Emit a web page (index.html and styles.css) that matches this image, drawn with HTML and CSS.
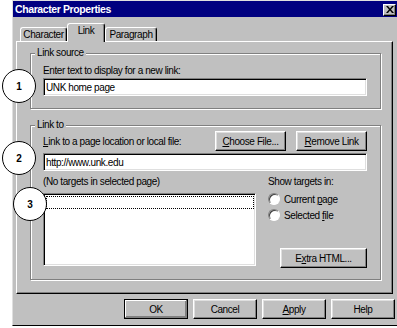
FILE: index.html
```html
<!DOCTYPE html>
<html lang="en">
<head>
  <meta charset="UTF-8">
  <title>Character Properties</title>
  <link rel="stylesheet" href="styles.css">
</head>
<body>

  <div class="window">
    <!-- Title bar -->
    <div class="titlebar">
      <span class="title">Character Properties</span>
      <button class="close">
        <svg width="8" height="7" viewBox="0 0 8 7"><path d="M0 0h2l2 2.5L6 0h2L5 3.5 8 7H6L4 4.5 2 7H0l3-3.5z" fill="#000"/></svg>
      </button>
    </div>

    <!-- Tabs -->
    <div class="tabs">
      <div class="tab tab-character">Character</div>
      <div class="tab tab-link active">Link</div>
      <div class="tab tab-paragraph">Paragraph</div>
    </div>

    <div class="panel">
      <fieldset class="group group-source">
        <legend>Link source</legend>
        <div class="label">Enter text to display for a new link:</div>
        <input class="field" type="text" value="UNK home page">
      </fieldset>

      <fieldset class="group group-target">
        <legend>Link to</legend>
        <div class="link-row">
          <div class="label"><u>L</u>ink to a page location or local file:</div>
          <div class="link-buttons">
            <button class="btn"><u>C</u>hoose File...</button>
            <button class="btn"><u>R</u>emove Link</button>
          </div>
        </div>
        <input class="field" type="text" value="http://www.unk.edu">

        <div class="targets">
          <div class="targets-list">
            <div class="label">(No targets in selected page)</div>
            <div class="listbox">
              <div class="focus-row"></div>
            </div>
          </div>
          <div class="targets-side">
            <div class="label">Show targets in:</div>
            <label class="radio"><span class="radio-dot"></span><span>Current <u>p</u>age</span></label>
            <label class="radio"><span class="radio-dot"></span><span>Selected <u>f</u>ile</span></label>
            <button class="btn btn-extra">E<u>x</u>tra HTML...</button>
          </div>
        </div>
      </fieldset>
    </div>

    <!-- Dialog buttons -->
    <div class="actions">
      <button class="btn btn-default">OK</button>
      <button class="btn">Cancel</button>
      <button class="btn"><u>A</u>pply</button>
      <button class="btn">Help</button>
    </div>
  </div>

  <!-- Numbered callouts over the screenshot -->
  <div class="callout callout-1">1</div>
  <div class="callout callout-2">2</div>
  <div class="callout callout-3">3</div>

</body>
</html>
```

FILE: styles.css
```css
html, body {
  margin: 0;
  padding: 0;
  background-color: #fff;
  font-family: "Liberation Sans", Arial, sans-serif;
  font-size: 10px;
  letter-spacing: -0.4px;
  color: #000;
}

body {
  width: 397px;
  height: 328px;
  overflow: hidden;
  position: relative;
}

u {
  text-decoration: underline;
  text-underline-offset: 1px;
}

/* Outer dialog frame */
.window {
  width: 387px;
  height: 326px;
  margin-left: 12px;
  box-sizing: border-box;
  border: 1px solid;
  border-color: #dfdfdf #000 #000 #dfdfdf;
  background-color: #c0c0c0;
  display: flex;
  flex-direction: column;
}

.titlebar {
  height: 16px;
  flex: none;
  background-color: #000080;
  color: #fff;
  display: flex;
  align-items: center;
  justify-content: space-between;
  padding: 0 2px;
}

.title {
  font-weight: bold;
  font-size: 10.5px;
  letter-spacing: -0.4px;
}

.close {
  width: 13px;
  height: 12px;
  padding: 0;
  margin-top: 1px;
  box-sizing: border-box;
  background-color: #c0c0c0;
  border: 1px solid;
  border-color: #fff #000 #000 #fff;
  box-shadow: inset -1px -1px #808080;
  display: flex;
  align-items: center;
  justify-content: center;
}

/* Tabs */
.tabs {
  display: flex;
  align-items: flex-end;
  height: 18px;
  margin-top: 6px;
  padding-left: 7px;
  position: relative;
  z-index: 1;
}

.tab {
  box-sizing: border-box;
  height: 14px;
  border: 1px solid;
  border-bottom: none;
  border-color: #fff #000 #000 #fff;
  border-radius: 3px 3px 0 0;
  box-shadow: inset -1px 0 #808080;
  display: flex;
  justify-content: center;
  align-items: center;
  line-height: 12px;
}

.tab-character { width: 47px; }
.tab-link { width: 38px; }
.tab-paragraph { width: 52px; }

.tab.active {
  height: 19px;
  margin-bottom: -1px;
  background-color: #c0c0c0;
  padding-bottom: 4px;
}

.panel {
  margin-left: 3px;
  width: 377px;
  height: 253px;
  flex: none;
  box-sizing: border-box;
  border: 1px solid;
  border-color: #fff #000 #000 #fff;
  box-shadow: inset -1px -1px #808080;
  padding: 5px 11px 0 13px;
}

/* Group boxes */
.group {
  margin: 0;
  padding: 5px 13px 12px 12px;
  border: 1px solid #808080;
  box-shadow: inset 1px 1px #fff, 1px 1px #fff;
  min-width: 0;
}

.group legend {
  padding: 0 2px;
  margin-left: -8px;
  line-height: 12px;
  background-color: #c0c0c0;
}

.group-target {
  margin-top: 10px;
  padding-top: 0;
  padding-bottom: 11px;
}

.label {
  line-height: 13px;
  white-space: nowrap;
}

.field {
  display: block;
  width: 100%;
  height: 18px;
  margin: 1px 0 0;
  padding: 0 2px;
  box-sizing: border-box;
  border: 1px solid;
  border-color: #808080 #fff #fff #808080;
  box-shadow: inset 1px 1px #000, inset -1px -1px #dfdfdf;
  background-color: #fff;
  font-family: inherit;
  font-size: 10px;
  letter-spacing: -0.4px;
  color: #000;
  outline: none;
}

/* Buttons */
.btn {
  height: 20px;
  padding: 0;
  box-sizing: border-box;
  background-color: #c0c0c0;
  border: 1px solid;
  border-color: #fff #000 #000 #fff;
  box-shadow: inset -1px -1px #808080, inset 1px 1px #dfdfdf;
  font-family: inherit;
  font-size: 10px;
  letter-spacing: -0.4px;
  color: #000;
}

.link-row {
  display: flex;
  justify-content: space-between;
  align-items: center;
}

.link-row .label {
  padding-top: 1px;
}

.link-buttons {
  display: flex;
  gap: 10px;
}

.link-buttons .btn {
  width: 71px;
}

.group-target .field {
  margin-top: 2px;
}

/* Targets area */
.targets {
  display: flex;
  gap: 12px;
  margin-top: 4px;
}

.targets-list {
  width: 214px;
}

.listbox {
  height: 73px;
  margin-top: 5px;
  box-sizing: border-box;
  background-color: #fff;
  border: 1px solid;
  border-color: #808080 #fff #fff #808080;
  box-shadow: inset 1px 1px #000, inset -1px -1px #dfdfdf;
  padding: 2px 1px 0 2px;
}

.focus-row {
  height: 11px;
  border: 1px dotted #000;
}

.targets-side {
  flex: 1;
  display: flex;
  flex-direction: column;
}

.radio {
  display: flex;
  align-items: center;
  gap: 4px;
  height: 16px;
}

.targets-side .label + .radio {
  margin-top: 3px;
}

.radio-dot {
  width: 12px;
  height: 12px;
  box-sizing: border-box;
  border-radius: 50%;
  border: 1px solid;
  border-color: #808080 #fff #fff #808080;
  box-shadow: inset 1px 1px #404040;
  background-color: #fff;
}

.btn-extra {
  width: 87px;
  margin-top: 25px;
  margin-left: 12px;
}

/* OK / Cancel / Apply / Help */
.actions {
  display: flex;
  justify-content: flex-end;
  gap: 5px;
  margin-top: 5px;
  padding-right: 3px;
}

.actions .btn {
  width: 64px;
}

.btn-default {
  border-color: #000;
  box-shadow: inset -1px -1px #808080, inset 1px 1px #fff, inset -2px -2px #808080;
}

/* Numbered callouts */
.callout {
  position: absolute;
  width: 34px;
  height: 34px;
  box-sizing: border-box;
  border: 1px solid #000;
  border-radius: 50%;
  background-color: #fff;
  display: flex;
  align-items: center;
  justify-content: center;
  font-weight: bold;
  font-size: 10px;
  letter-spacing: 0;
}

.callout-1 { left: 2px; top: 69px; }
.callout-2 { left: 2px; top: 141px; }
.callout-3 { left: 13px; top: 187px; }
```
